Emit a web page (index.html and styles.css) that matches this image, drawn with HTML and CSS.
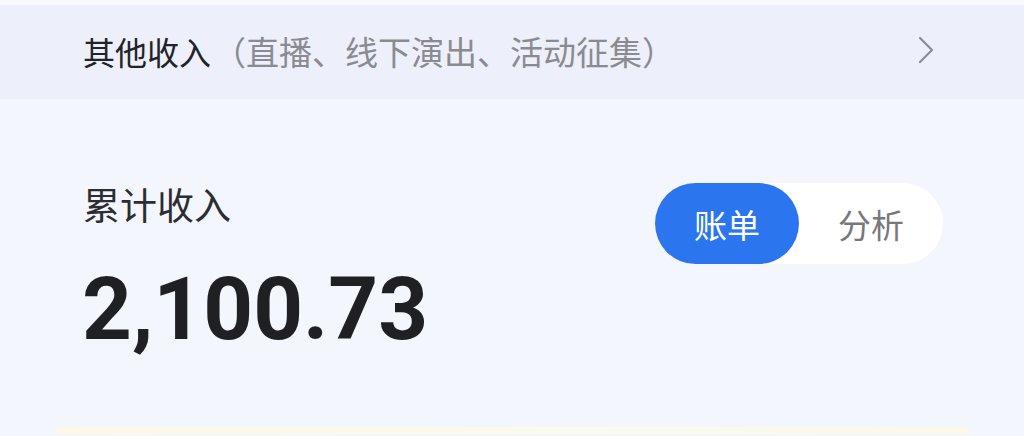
FILE: index.html
```html
<!DOCTYPE html>
<html lang="zh-CN">
<head>
<meta charset="utf-8">
<title>收入</title>
<link rel="stylesheet" href="styles.css">
</head>
<body>
<div class="page">
  <div class="top-strip"></div>
  <div class="other-row">
    <div class="other-text"><span class="other-title">其他收入</span><span class="other-note">（直播、线下演出、活动征集）</span></div>
    <svg class="chevron" width="18" height="28" viewBox="0 0 18 28" aria-hidden="true">
      <path d="M3 2 L15 14 L3 26" fill="none" stroke="#8a8c92" stroke-width="2.2" stroke-linecap="round" stroke-linejoin="round"/>
    </svg>
  </div>
  <div class="summary">
    <div class="summary-left">
      <div class="label">累计收入</div>
      <div class="amount">2,100.73</div>
    </div>
    <div class="toggle">
      <div class="tab active">账单</div>
      <div class="tab">分析</div>
    </div>
  </div>
  <div class="card"></div>
</div>
</body>
</html>
```
FILE: styles.css
```css
html, body {
  margin: 0;
  padding: 0;
}
body {
  background: #f3f6fd;
  font-family: "Noto Sans CJK SC", "Noto Sans", sans-serif;
  width: 1024px;
  height: 436px;
  overflow: hidden;
}
.page {
  display: flex;
  flex-direction: column;
  height: 436px;
  overflow: hidden;
}
.top-strip {
  height: 5px;
  background: #f7f9fe;
}
.other-row {
  height: 94px;
  background: #edf0fa;
  display: flex;
  align-items: center;
  justify-content: space-between;
  padding: 0 89px 0 83px;
}
.other-text {
  font-size: 32px;
  line-height: 40px;
  margin-top: -3px;
}
.other-title {
  color: #222326;
}
.other-note {
  font-size: 33px;
  color: #8a8b90;
  margin-left: 2px;
}
.chevron {
  display: block;
  margin-top: -4px;
}
.summary {
  display: flex;
  justify-content: space-between;
  align-items: flex-start;
  padding: 84px 81px 0 83px;
}
.summary-left {
  display: flex;
  flex-direction: column;
  margin-top: 1px;
}
.label {
  font-size: 37px;
  line-height: 40px;
  color: #2c2d30;
}
.amount {
  font-family: Roboto, "Noto Sans", sans-serif;
  font-weight: 700;
  font-size: 87px;
  line-height: 87px;
  color: #1f2023;
  margin-top: 42px;
  margin-left: -1px;
}
.toggle {
  display: flex;
  width: 288px;
  height: 81px;
  border-radius: 41px;
  background: #ffffff;
}
.tab {
  width: 144px;
  height: 81px;
  border-radius: 41px;
  display: flex;
  align-items: center;
  justify-content: center;
  font-size: 33px;
  color: #77787c;
}
.tab.active {
  background: #2b76ef;
  color: #ffffff;
}
.card {
  margin: 74px 54px 0 55px;
  height: 7px;
  flex-shrink: 0;
  border-radius: 16px 16px 0 0;
  background: linear-gradient(90deg, #fdf8e6, #fcfaee 60%, #fbf8ea);
}
```
